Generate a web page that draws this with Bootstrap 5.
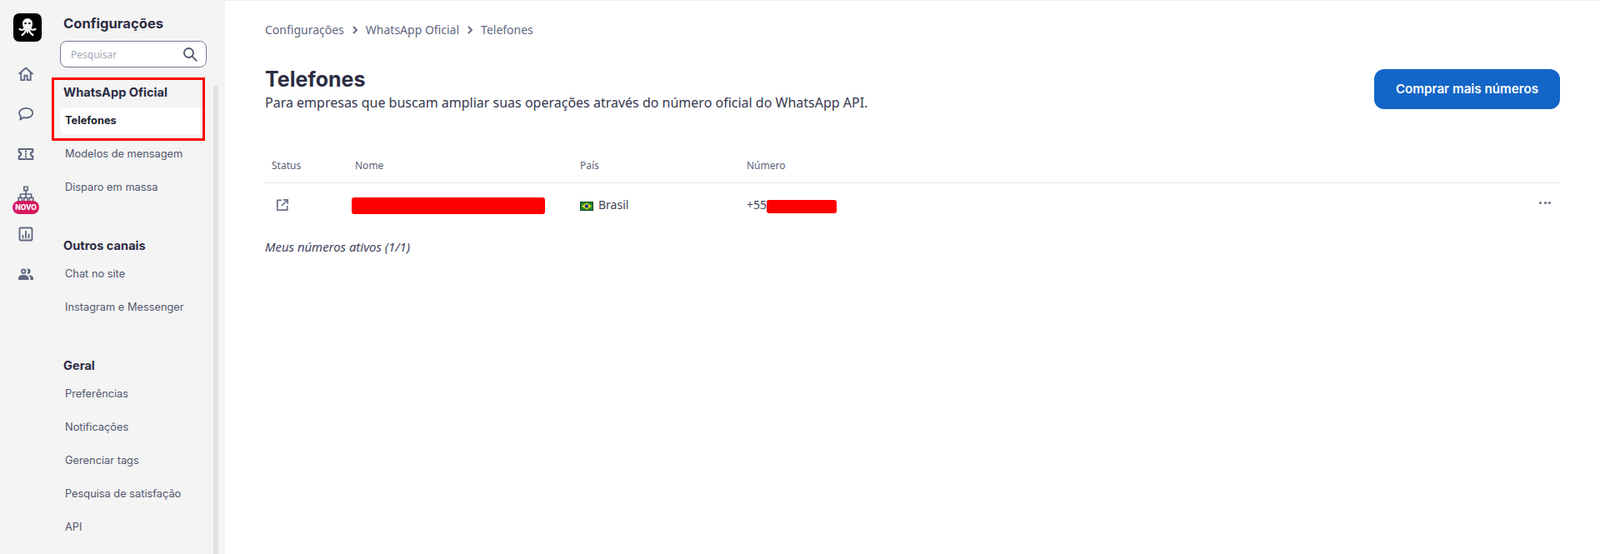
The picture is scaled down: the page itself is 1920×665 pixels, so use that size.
<!DOCTYPE html>
<html lang="pt-BR">
<head>
<meta charset="utf-8">
<title>Telefones</title>
<link href="https://cdn.jsdelivr.net/npm/bootstrap@5.3.0/dist/css/bootstrap.min.css" rel="stylesheet">
<style>
html,body{height:665px;overflow:hidden;background:#fff}
body{font-family:"Noto Sans",sans-serif;color:#2c2c44}
.shell{height:665px;border-top:1px solid #eceef1}
.rail{width:62px;background:#f4f4f4;padding-top:15px;flex:none}
.logo-box{width:34px;height:34px;background:#000;border-radius:7px;margin-left:3px;margin-bottom:15px}
.rail-item{height:48px;width:62px}
.rail-item svg{width:22px;height:22px;fill:none;stroke:#5f6780;stroke-width:1.7;stroke-linecap:round;stroke-linejoin:round}
.novo-tag{position:absolute;left:15px;top:32px;background:#d6195f;color:#fff;font:800 8.5px/16px "Inter",sans-serif;border-radius:8px;width:32px;text-align:center}
.rail-netwrap{padding-top:13px;line-height:0}
.panel{width:208px;background:#f4f4f4;flex:none;position:relative}
.panel-title{font:700 16.6px/20px "Inter",sans-serif;margin:17px 0 0 14px;color:#2c2c44}
.search-box{margin:11px 0 0 10px;width:176px;height:32px;border:1px solid #747c96;border-radius:8px;background:#fff;padding:0 10px 0 12px}
.search-box input{border:0;outline:0;width:130px;font:400 12px "Noto Sans",sans-serif;background:transparent;padding:0}
.search-box input::placeholder{color:#a4a8b6}
.menu-scroll{position:absolute;left:194px;top:102px;width:6px;bottom:0;background:#e1e2e6;border-radius:3px 3px 0 0}
.menu-head{font:700 14.6px/20px "Inter",sans-serif;margin-left:14px;color:#2c2c44}
.menu-list{margin-top:8px}
.menu-link{display:block;height:32px;width:174px;margin-left:10px;padding-left:6px;margin-bottom:8px;font:400 12.8px/32px "Inter",sans-serif;color:#51566d;text-decoration:none;border-radius:8px 0 0 8px}
.menu-link.is-active{background:#fff;font-weight:700;color:#1d1f30}
.group-one{margin-top:20px}
.group-two{margin-top:44px}
.group-three{margin-top:44px}
.red-frame{position:absolute;left:0;top:92px;width:184px;height:76px;border:3px solid #f00;pointer-events:none}
.main-area{padding:0 48px;min-width:0}
.crumbs{padding-top:25px;font-size:14px;line-height:20px;color:#62677f;gap:9px}
.crumbs svg{width:8px;height:10px;fill:none;stroke:#62677f;stroke-width:1.8}
.page-head{margin-top:34px;height:72px}
.page-title{font:700 25px/30px "Inter",sans-serif;color:#2c2c44;margin:0}
.page-sub{font-size:16px;line-height:22px;color:#34384e;margin:2px 0 0}
.buy-btn{width:223px;height:48px;background:#1366c7;border:0;border-radius:12px;color:#fff;font:600 15.2px/48px "Inter",sans-serif;padding:0;margin-top:3px}
.phone-table{margin-top:38px}
.phone-table th{font-weight:400;font-size:12px;line-height:18px;color:#5c6177;padding:0 0 11px 8px;border-bottom:1px solid #e3e4e7;vertical-align:middle}
.phone-table td{padding:0;height:52px;vertical-align:middle;font-size:14px;color:#3f445a;border-bottom:0}
.status-cell svg{margin-left:13px;display:block}
.redact{display:inline-block;background:#f00;border-radius:3px;vertical-align:middle}
.flag-ico{width:16px;height:11px;margin-right:6px}
.foot-note{font-style:italic;font-size:14.9px;line-height:20px;color:#3f445a;margin:14px 0 0}
.dots{gap:2.500px;padding-right:11px;margin-bottom:4px}
.dots i{display:block;width:3px;height:3px;background:#5f6780;border-radius:50%}
</style>
</head>
<body>
<div class="shell d-flex">
  <nav class="rail d-flex flex-column align-items-center">
    <div class="logo-box d-flex align-items-center justify-content-center">
      <svg width="34" height="34" viewBox="0 0 34 34"><path d="M11 12a6 6 0 0 1 12 0c0 3-1 4-1.500 6h-9C12 16 11 15 11 12Z" fill="#fff"/><g fill="none" stroke="#fff" stroke-width="2.200" stroke-linecap="round"><path d="M13.500 18.500c-1.500 1.300-4 1.500-6 .5"/><path d="M20.500 18.500c1.500 1.300 4 1.500 6 .5"/><path d="M15 19c0 3-2 5.500-4.500 7"/><path d="M19 19c0 3 2 5.500 4.500 7"/><path d="M17 19v4"/></g><circle cx="14.600" cy="12" r="1.300"/><circle cx="19.400" cy="12" r="1.300"/></svg>
    </div>
    <div class="rail-item d-flex align-items-center justify-content-center"><svg viewBox="0 0 20 20"><path d="M2.800 9.500 10 3.200l7.200 6.300"/><path d="M4.800 8v8.500h3.700v-5h3v5h3.700V8"/></svg></div>
    <div class="rail-item d-flex align-items-center justify-content-center"><svg viewBox="0 0 20 20"><path d="M10.500 3.500c4 0 7 2.300 7 5.300s-3 5.300-7 5.300c-1.100 0-2-.1-3-.5l-3.700 2.400.9-3.300C3.400 11.600 2.800 10.300 2.800 8.800c0-3 3.500-5.300 7.700-5.300Z"/></svg></div>
    <div class="rail-item d-flex align-items-center justify-content-center"><svg viewBox="0 0 20 20" style="stroke-width:1.900"><path d="M2.500 4.500h15v3.300a2.200 2.200 0 0 0 0 4.400v3.300h-15v-3.300a2.200 2.200 0 0 0 0-4.400Z"/><path d="M10 6.800v.6M10 9.700v.6M10 12.600v.6"/></svg></div>
    <div class="rail-item position-relative d-flex align-items-start justify-content-center">
      <div class="rail-netwrap"><svg viewBox="0 0 20 20" style="stroke-width:1.500"><rect x="8" y="2" width="4" height="4"/><rect x="2" y="14" width="4" height="4"/><rect x="8" y="14" width="4" height="4"/><rect x="14" y="14" width="4" height="4"/><path d="M10 6v8M4 14v-4h12v4"/></svg></div>
      <span class="novo-tag">NOVO</span>
    </div>
    <div class="rail-item d-flex align-items-center justify-content-center"><svg viewBox="0 0 20 20"><rect x="3.200" y="3.200" width="13.600" height="13.600" rx="1.500"/><path d="M6.800 14v-2.500M10 14V7M13.200 14v-3.500"/></svg></div>
    <div class="rail-item d-flex align-items-center justify-content-center"><svg viewBox="0 0 20 20"><circle cx="7.500" cy="7" r="2"/><path d="M2.500 15.500c0-2.500 2.200-3.700 5-3.700s5 1.200 5 3.700Z" fill="#5f6780"/><path d="M12.300 5a2 2 0 0 1 0 4" fill="#5f6780"/><path d="M14.500 12c1.800.5 3 1.700 3 3.500h-2" fill="#5f6780"/></svg></div>
  </nav>
  <aside class="panel">
    <div class="panel-title">Configurações</div>
    <div class="search-box d-flex align-items-center justify-content-between">
      <input type="text" placeholder="Pesquisar" aria-label="Pesquisar">
      <svg width="18" height="18" viewBox="0 0 18 18" fill="none" stroke="#4f556c" stroke-width="1.800" stroke-linecap="round"><circle cx="7.500" cy="7.500" r="5.500"/><path d="m11.800 11.800 5 5"/></svg>
    </div>
    <div class="menu-head group-one">WhatsApp Oficial</div>
    <div class="menu-list">
      <a class="menu-link is-active" href="#">Telefones</a>
      <a class="menu-link" href="#">Modelos de mensagem</a>
      <a class="menu-link" href="#">Disparo em massa</a>
    </div>
    <div class="menu-head group-two">Outros canais</div>
    <div class="menu-list">
      <a class="menu-link" href="#">Chat no site</a>
      <a class="menu-link" href="#">Instagram e Messenger</a>
    </div>
    <div class="menu-head group-three">Geral</div>
    <div class="menu-list">
      <a class="menu-link" href="#">Preferências</a>
      <a class="menu-link" href="#">Notificações</a>
      <a class="menu-link" href="#">Gerenciar tags</a>
      <a class="menu-link" href="#">Pesquisa de satisfação</a>
      <a class="menu-link" href="#">API</a>
    </div>
    <div class="menu-scroll"></div>
    <div class="red-frame"></div>
  </aside>
  <main class="main-area flex-grow-1">
    <div class="crumbs d-flex align-items-center">
      <span>Configurações</span>
      <svg viewBox="0 0 8 10"><path d="m2 1 4 4-4 4"/></svg>
      <span>WhatsApp Oficial</span>
      <svg viewBox="0 0 8 10"><path d="m2 1 4 4-4 4"/></svg>
      <span>Telefones</span>
    </div>
    <div class="page-head d-flex justify-content-between align-items-start">
      <div>
        <h1 class="page-title">Telefones</h1>
        <p class="page-sub">Para empresas que buscam ampliar suas operações através do número oficial do WhatsApp API.</p>
      </div>
      <button class="btn buy-btn" type="button">Comprar mais números</button>
    </div>
    <table class="table table-borderless phone-table mb-0">
      <thead>
        <tr>
          <th style="width:100px">Status</th>
          <th style="width:270px">Nome</th>
          <th style="width:200px">País</th>
          <th>Número</th>
          <th style="width:40px"></th>
        </tr>
      </thead>
      <tbody>
        <tr>
          <td class="status-cell"><svg width="16" height="16" viewBox="0 0 16 16" fill="none" stroke="#6b7186" stroke-width="1.700"><path d="M7 2.300H1.800v11.900h11.900V9"/><path d="M9 1.800h5.200V7M14 2 7 9"/></svg></td>
          <td class="ps-2"><span class="redact" style="width:232px;height:20px;margin-left:-4px"></span></td>
          <td class="ps-2"><svg class="flag-ico" viewBox="0 0 16 11"><rect width="16" height="11" fill="#123f18"/><rect x="1" y="1" width="14" height="9" fill="#1d8a33"/><path d="M8 1.500 14 5.500 8 9.500 2 5.500Z" fill="#f7dc17"/><circle cx="8" cy="5.500" r="2.300" fill="#1b3d8c"/></svg>Brasil</td>
          <td class="ps-2">+55<span class="redact" style="width:84px;height:16px"></span></td>
          <td><div class="dots d-flex justify-content-end"><i></i><i></i><i></i></div></td>
        </tr>
      </tbody>
    </table>
    <p class="foot-note">Meus números ativos (1/1)</p>
  </main>
</div>
<script src="https://cdn.jsdelivr.net/npm/bootstrap@5.3.0/dist/js/bootstrap.bundle.min.js"></script>
</body>
</html>
